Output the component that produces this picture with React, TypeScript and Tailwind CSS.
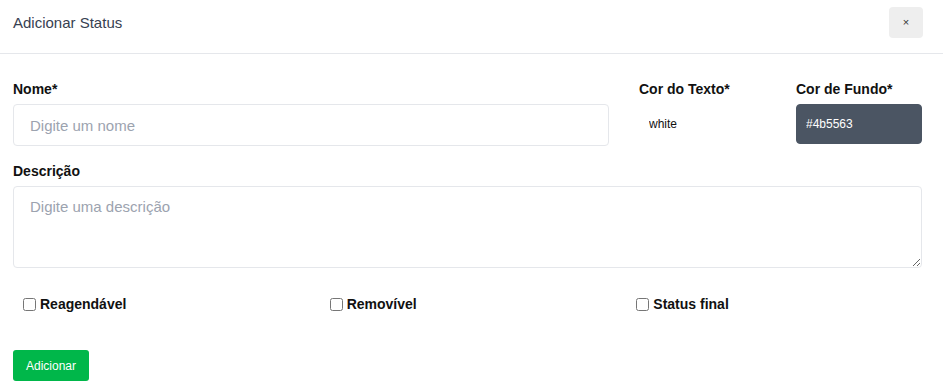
import React from "react";

const FLAGS = ["Reagendável", "Removível", "Status final"];

export default function App() {
  return (
    <div className="h-[389px] w-[943px] overflow-hidden bg-white font-['Liberation_Sans',Arial,sans-serif] text-[#111]">
      <header className="flex h-[54px] items-start justify-between border-b border-[#e5e7eb] pl-[13px] pr-[20px]">
        <h2 className="pt-[14px] text-[15px] leading-[18px] text-[#374151]">Adicionar Status</h2>
        <button
          type="button"
          aria-label="Fechar"
          className="mt-[7px] flex h-[31px] w-[34px] items-center justify-center rounded bg-[#eeeeee] text-[11px] leading-none text-[#333]"
        >
          ×
        </button>
      </header>

      <form className="pl-[13px] pr-[21px] pt-[26px]" onSubmit={(e) => e.preventDefault()}>
        <div className="flex gap-[30px]">
          <label className="flex w-[596px] flex-col">
            <span className="mb-[6px] text-[14px] font-bold leading-[18px]">Nome*</span>
            <input
              placeholder="Digite um nome"
              className="h-[42px] rounded border border-[#e5e7eb] px-[16px] text-[15px] text-[#111] outline-none placeholder:text-[#9ca3af]"
            />
          </label>
          <label className="flex w-[126px] flex-col">
            <span className="mb-[6px] text-[14px] font-bold leading-[18px]">Cor do Texto*</span>
            <input
              defaultValue="white"
              className="h-[40px] rounded border border-white bg-white px-[9px] text-[12px] text-[#111] outline-none"
            />
          </label>
          <label className="ml-px flex w-[126px] flex-col">
            <span className="mb-[6px] text-[14px] font-bold leading-[18px]">Cor de Fundo*</span>
            <input
              defaultValue="#4b5563"
              className="h-[40px] rounded border border-[#4b5563] bg-[#4b5563] px-[9px] text-[12px] text-white outline-none"
            />
          </label>
        </div>

        <label className="mt-[16px] flex flex-col">
          <span className="mb-[6px] text-[14px] font-bold leading-[18px]">Descrição</span>
          <textarea
            placeholder="Digite uma descrição"
            className="h-[82px] rounded border border-[#e5e7eb] px-[16px] py-[9px] text-[15px] text-[#111] outline-none placeholder:text-[#9ca3af]"
          />
        </label>

        <div className="mt-[27px] grid w-[920px] grid-cols-3">
          {FLAGS.map((flag) => (
            <label key={flag} className="flex items-center px-[10px]">
              <input type="checkbox" className="m-0 h-[13px] w-[13px]" />
              <span className="ml-[4px] text-[14px] font-bold leading-[18px]">{flag}</span>
            </label>
          ))}
        </div>

        <button
          type="submit"
          className="mt-[37px] h-[31px] w-[76px] rounded-[3px] bg-[#00b74a] text-[12px] text-white"
        >
          Adicionar
        </button>
      </form>
    </div>
  );
}
